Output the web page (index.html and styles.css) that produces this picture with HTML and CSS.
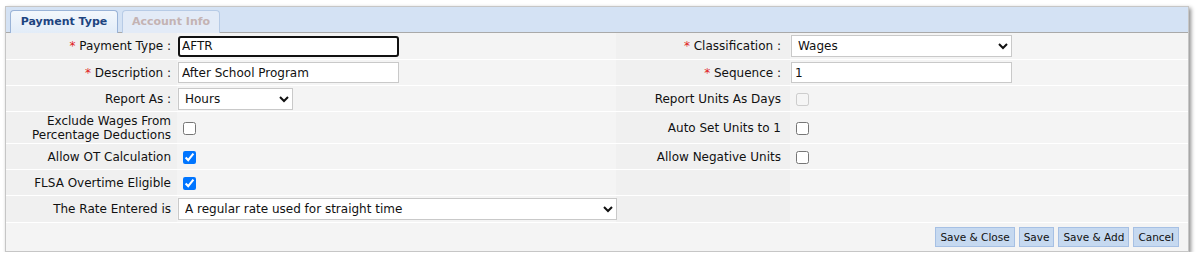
FILE: index.html
```html
<!DOCTYPE html>
<html lang="en">
<head>
    <meta charset="UTF-8">
    <title>Payment Type</title>
    <link rel="stylesheet" href="styles.css">
</head>
<body>
    <div class="panel">
        <!-- Вкладки -->
        <div class="tab-strip">
            <div class="tab active">Payment Type</div>
            <div class="tab">Account Info</div>
        </div>

        <table class="form-table">
            <colgroup>
                <col class="col-label">
                <col class="col-field">
                <col class="col-label2">
                <col>
            </colgroup>
            <tr class="first">
                <td class="label"><span class="req">*</span> Payment Type :</td>
                <td class="field"><input type="text" class="text focused" value="AFTR"></td>
                <td class="label"><span class="req">*</span> Classification :</td>
                <td class="field">
                    <select class="sel sel-wide">
                        <option>Wages</option>
                    </select>
                </td>
            </tr>
            <tr>
                <td class="label"><span class="req">*</span> Description :</td>
                <td class="field"><input type="text" class="text" value="After School Program"></td>
                <td class="label"><span class="req">*</span> Sequence :</td>
                <td class="field"><input type="text" class="text" value="1"></td>
            </tr>
            <tr>
                <td class="label">Report As :</td>
                <td class="field">
                    <select class="sel sel-short">
                        <option>Hours</option>
                    </select>
                </td>
                <td class="label">Report Units As Days</td>
                <td class="field"><input type="checkbox" disabled></td>
            </tr>
            <tr class="tall">
                <td class="label">Exclude Wages From<br>Percentage Deductions</td>
                <td class="field"><input type="checkbox"></td>
                <td class="label">Auto Set Units to 1</td>
                <td class="field"><input type="checkbox"></td>
            </tr>
            <tr>
                <td class="label">Allow OT Calculation</td>
                <td class="field"><input type="checkbox" checked></td>
                <td class="label">Allow Negative Units</td>
                <td class="field"><input type="checkbox"></td>
            </tr>
            <tr>
                <td class="label">FLSA Overtime Eligible</td>
                <td class="field"><input type="checkbox" checked></td>
                <td class="label"></td>
                <td class="field"></td>
            </tr>
            <tr class="last">
                <td class="label">The Rate Entered is</td>
                <td class="field">
                    <select class="sel sel-full">
                        <option>A regular rate used for straight time</option>
                    </select>
                </td>
                <td class="label"></td>
                <td class="field"></td>
            </tr>
        </table>

        <!-- Кнопки -->
        <div class="button-bar">
            <button>Save &amp; Close</button>
            <button>Save</button>
            <button>Save &amp; Add</button>
            <button>Cancel</button>
        </div>
    </div>
</body>
</html>
```

FILE: styles.css
```css
/* Общие настройки */
body {
    margin: 0;
    padding: 0;
    background: #fff;
    font-family: "DejaVu Sans", Verdana, sans-serif;
    font-size: 12px;
    color: #111;
}

/* Панель с тенью */
.panel {
    width: 1184px;
    margin: 6px 0 0 5px;
    border: 1px solid #c6c6c6;
    box-sizing: border-box;
    background: #f4f4f4;
    box-shadow: 2px 2px 4px rgba(0, 0, 0, .45);
}

/* Полоса вкладок */
.tab-strip {
    display: flex;
    gap: 4px;
    height: 26px;
    padding: 3px 0 0 4px;
    box-sizing: border-box;
    background: #d4e2f4;
    border-bottom: 1px solid #a9a9a9;
}

.tab {
    height: 23px;
    padding: 0;
    box-sizing: border-box;
    line-height: 22px;
    font-size: 11px;
    font-weight: bold;
    text-align: center;
    white-space: nowrap;
    color: #c4b3b3;
    background: #e3ebf7;
    border: 1px solid #b7cbe6;
    border-bottom: none;
    border-radius: 4px 4px 0 0;
}

.tab.active {
    width: 108px;
    color: #1d4480;
    background: linear-gradient(#f3f7fc, #e2ecf8);
    border-color: #9ab3d7;
}

.tab + .tab {
    width: 98px;
}

/* Таблица формы */
.form-table {
    width: 100%;
    border-collapse: collapse;
    table-layout: fixed;
}

.col-label {
    width: 171px;
}

.col-field {
    width: 439px;
}

.col-label2 {
    width: 174px;
}

.form-table td {
    height: 25px;
    padding: 0;
    border-bottom: 1px solid #fff;
    vertical-align: middle;
}

.form-table tr.first td {
    height: 26px;
}

.form-table tr.tall td {
    height: 31px;
}

.form-table tr.last td {
    height: 26px;
}

td.label {
    background: #f0f0f0;
    text-align: right;
    padding-right: 6px;
    line-height: 14px;
}

td.label:nth-child(3) {
    padding-right: 9px;
}

td.field {
    background: #f4f4f4;
    padding-left: 1px;
}

.req {
    color: #e01a1a;
}

/* Поля ввода */
input.text {
    width: 221px;
    height: 21px;
    padding: 0 3px;
    box-sizing: border-box;
    border: 1px solid #c9c9c9;
    font-family: inherit;
    font-size: 12px;
    color: #111;
    background: #fff;
}

input.text.focused {
    border: 2px solid #111;
    border-radius: 3px;
    padding: 0 2px;
}

.sel {
    height: 22px;
    padding: 0 2px;
    box-sizing: border-box;
    border: 1px solid #c9c9c9;
    border-radius: 0;
    font-family: inherit;
    font-size: 12px;
    color: #111;
    background: #fff;
}

.sel-wide {
    width: 221px;
}

.sel-short {
    width: 115px;
}

.sel-full {
    width: 439px;
}

input[type="checkbox"] {
    width: 13px;
    height: 13px;
    margin: 0 0 0 5px;
    vertical-align: middle;
}

/* Кнопки внизу */
.button-bar {
    display: flex;
    justify-content: flex-end;
    gap: 4px;
    height: 28px;
    padding: 4px 9px 0 0;
    box-sizing: border-box;
}

button {
    height: 20px;
    padding: 0 4px;
    font-family: inherit;
    font-size: 10.5px;
    color: #111;
    background: #c6d9f0;
    border: 1px solid #a6c0e4;
    border-radius: 0;
    cursor: pointer;
}
```
